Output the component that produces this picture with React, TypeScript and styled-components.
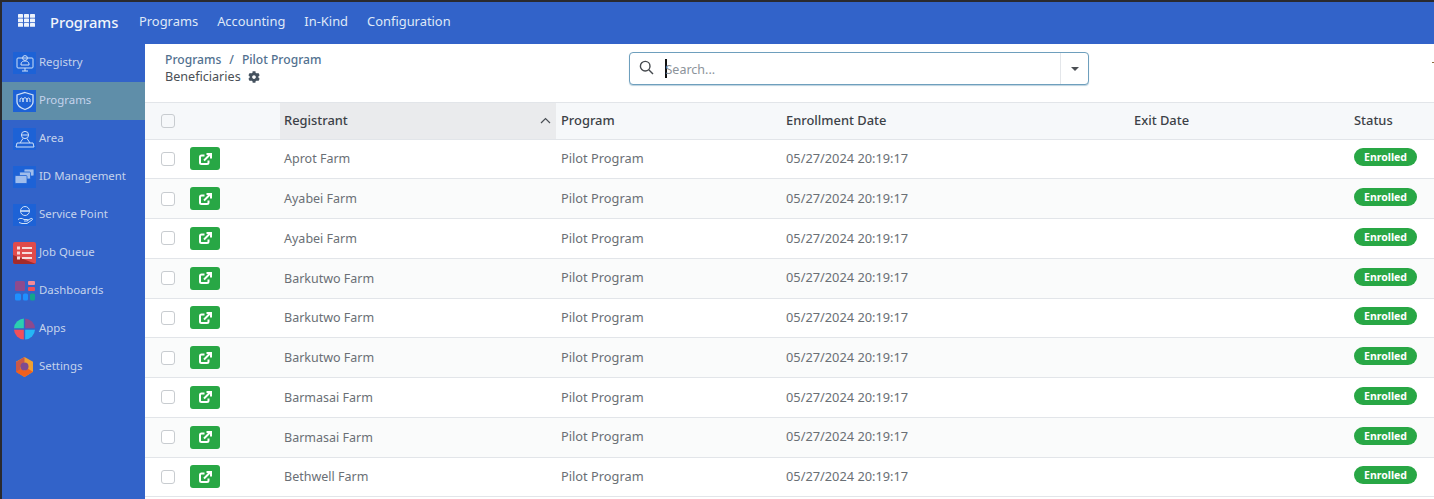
import React from "react";
import styled, { createGlobalStyle } from "styled-components";

const Global = createGlobalStyle`
  html, body { margin: 0; padding: 0; height: 100%; overflow: hidden; background: #fff; }
  body { font-family: "Noto Sans", "Open Sans", sans-serif; }
  #root { height: 100%; }
  * { box-sizing: border-box; }
`;
const Frame = styled.div`
  width: 1434px; height: 499px; background: #fff; overflow: hidden;
  border-top: 2px solid #2a2a2e; border-left: 2px solid #2a2a2e;
  display: flex; flex-direction: column;
`;
const TopBar = styled.header`
  height: 42px; flex: none; background: #3263c9; display: flex; align-items: center; color: #fff; padding-bottom: 3px;
`;
const AppsButton = styled.div`
  width: 48px; display: flex; justify-content: center; padding: 0 0 2px 0;
`;
const Brand = styled.div`
  font-size: 14.7px; font-weight: 500; color: #f1f5fb; width: 89px;
`;
const TopNav = styled.nav`
  display: flex; gap: 19px; font-size: 12.9px; color: #dfe8f7; margin-bottom: 1px;
`;
const Body = styled.div`
  flex: 1; display: flex; min-height: 0;
`;
const Sidebar = styled.aside`
  width: 143px; flex: none; background: #3263c9;
`;
const SideItem = styled.div<{ $active?: boolean }>`
  height: 38px; display: flex; align-items: center; gap: 3px; padding-left: 11px;
  background: ${(p) => (p.$active ? "#5f8ea9" : "transparent")};
  color: #c5d3ec; font-size: 11.4px; padding-bottom: 1px;
`;
const SideLabel = styled.span`
  padding-bottom: 2px;
`;
const IconBox = styled.span<{ $tile?: boolean }>`
  width: 23px; height: 22px; flex: none; display: flex; align-items: center; justify-content: center;
  background: ${(p) => (p.$tile ? "#1d62d6" : "transparent")};
`;
const Main = styled.main`
  flex: 1; min-width: 0; display: flex; flex-direction: column;
`;
const ControlPanel = styled.div`
  height: 58px; flex: none; display: grid; grid-template-columns: 464px 460px 1fr; padding-left: 20px;
`;
const Crumbs = styled.div`
  padding-top: 8px; font-size: 12px; line-height: 16px;
`;
const CrumbTrail = styled.div`
  color: #52718f; font-weight: 500; display: flex; gap: 8px; height: 16px; font-size: 12.1px;
`;
const CrumbSub = styled.div`
  color: #4a4f55; display: flex; align-items: center; gap: 7px; margin-top: 1px; font-size: 12.6px;
`;
const SearchBox = styled.div`
  margin-top: 8px; height: 33px; border: 1px solid #6e9fbd; border-radius: 4px;
  display: flex; align-items: center; background: #fff; box-shadow: 0 1px 1px #bcd2df;
`;
const SearchIcon = styled.span`
  width: 35px; display: flex; justify-content: center; padding-right: 3px; margin-bottom: 2px;
`;
const Caret = styled.span`
  width: 1.5px; height: 19px; background: #111; flex: none;
`;
const Placeholder = styled.span`
  flex: 1; font-size: 12.5px; color: #8c939a; margin-left: -1px; padding-top: 1px;
`;
const DropButton = styled.span`
  width: 28px; height: 100%; border-left: 1px solid #e3e6ea; display: flex; align-items: center; justify-content: center;
`;
const Triangle = styled.span`
  width: 0; height: 0; border-left: 4px solid transparent; border-right: 4px solid transparent; border-top: 4.5px solid #4b4f54;
`;
const Tick = styled.div`
  justify-self: end; width: 2px; height: 1px; margin-top: 18px; background: #8a6a3a;
`;
const Table = styled.div`
  display: flex; flex-direction: column; flex: 1; min-height: 0;
`;
const Columns = `grid-template-columns: 41px 94px 277px 225px 348px 220px 1fr;`;
const HeadRow = styled.div`
  height: 37.5px; flex: none; display: grid; ${Columns}
  background: #f6f8fa; border-top: 1px solid #e2e5e9; border-bottom: 1px solid #e2e5e9;
  font-size: 12.9px; font-weight: 500; color: #3c4147; align-items: stretch;
`;
const HeadCell = styled.div`
  display: flex; align-items: center; padding: 0 0 1.5px 4px;
`;
const SortedHeadCell = styled(HeadCell)`
  justify-content: space-between; padding-right: 5px; margin-right: 1px; background: #eaebed;
`;
const CheckCell = styled.div`
  display: flex; align-items: center; padding-left: 16px;
`;
const Box = styled.span<{ $head?: boolean }>`
  width: 14px; height: 14px; border: 1px solid #c8ccd0; border-radius: 3px; display: block;
  background: ${(p) => (p.$head ? "#f6f8fa" : "#fff")};
`;
const Row = styled.div`
  height: 39.75px; flex: none; display: grid; ${Columns}
  align-items: center; font-size: 12.8px; color: #6a6f75;
  border-bottom: 1px solid #e2e5e9;
  &:nth-child(odd) { background: #fafbfb; }
`;
const Cell = styled.div`
  padding: 0 0 1.5px 4px;
`;
const NameCell = styled(Cell)`
  font-size: 12.5px; padding-bottom: 0;
`;
const OpenCell = styled.div`
  padding-left: 4px; display: flex;
`;
const OpenButton = styled.span`
  width: 30px; height: 23px; border-radius: 3px; background: #28a745; display: flex; align-items: center; justify-content: center;
`;
const Badge = styled.span`
  display: inline-flex; width: 63px; height: 18px; border-radius: 9px; background: #28a745; color: #fff;
  font-size: 10.5px; font-weight: 700; align-items: center; justify-content: center; margin-bottom: 3px;
`;
const StatusCell = styled.div`
  padding-left: 4px; display: flex;
`;

const Line = { fill: "none", stroke: "#cfe0f7", strokeWidth: 1 } as const;

const RegistryIcon = () => (
  <svg width="20" height="20" viewBox="0 0 20 20" {...Line}>
    <rect x="2" y="5" width="16" height="10" rx="1" />
    <circle cx="10" cy="5" r="2.4" />
    <path d="M6 11c0-2 2-3 4-3s4 1 4 3v1H6zM7 18h6M10 15v3" />
  </svg>
);
const ProgramsIcon = () => (
  <svg width="20" height="20" viewBox="0 0 20 20" {...Line}>
    <path d="M10 1.5 18 4v7c0 3.5-4 6-8 7.5C6 17 2 14.5 2 11V4z" strokeWidth="1.3" />
    <path d="M5 11V8l1.5-1L8 8v3M8 11V8l2-1.5L12 8v3M12 11V8l1.5-1L15 8v3" />
  </svg>
);
const AreaIcon = () => (
  <svg width="20" height="20" viewBox="0 0 20 20" {...Line}>
    <circle cx="10" cy="6" r="3.6" />
    <path d="M8 9.5 5 14M12 9.5l3 4.5M2 14h16l1 4H1zM7 6h6" />
  </svg>
);
const IdIcon = () => (
  <svg width="21" height="18" viewBox="0 0 21 18" fill="#9fbdec" stroke="#1d62d6" strokeWidth="0.8">
    <rect x="10" y="1" width="10" height="7" rx="1" />
    <rect x="5.5" y="4" width="11" height="7" rx="1" />
    <rect x="1" y="7.5" width="12" height="8" rx="1" />
  </svg>
);
const ServiceIcon = () => (
  <svg width="20" height="20" viewBox="0 0 20 20" {...Line}>
    <circle cx="10" cy="6" r="4.5" />
    <path d="M6 6h8" strokeWidth="1.6" />
    <path d="M3 14.5c2-1.5 4-1.5 6 0h3c1.5 0 1.5 1.5 0 1.5H9M12 15.5l4-2c1.5-.5 2 .8 1 1.5l-5 3.5H7l-3-1" />
  </svg>
);
const JobIcon = () => (
  <svg width="23" height="22" viewBox="0 0 23 22">
    <rect width="23" height="22" rx="2" fill="#e04b4b" />
    <path d="M0 13 23 22H2a2 2 0 0 1-2-2z" fill="#a32b2b" />
    <g fill="#f6dcdc">
      <rect x="4" y="4.5" width="3" height="3" />
      <rect x="4" y="9.5" width="3" height="3" />
      <rect x="4" y="14.5" width="3" height="3" />
      <rect x="9" y="5" width="10" height="2" />
      <rect x="9" y="10" width="10" height="2" />
      <rect x="9" y="15" width="10" height="2" />
    </g>
  </svg>
);
const DashIcon = () => (
  <svg width="20" height="20" viewBox="0 0 20 20">
    <rect x="0" y="0" width="10" height="10" rx="1.5" fill="#8d4a8e" />
    <rect x="13" y="0" width="7" height="4" rx="1" fill="#f38a96" />
    <rect x="13" y="6" width="7" height="4" rx="1" fill="#ef4e58" />
    <rect x="0" y="12.5" width="6" height="7" rx="1.5" fill="#1e90ff" />
    <rect x="8" y="12.5" width="5" height="7" rx="1.5" fill="#1e90ff" />
    <rect x="15" y="12.5" width="5" height="7" rx="1.5" fill="#12a58c" />
  </svg>
);
const AppsIcon = () => (
  <svg width="23" height="22" viewBox="0 0 22 22">
    <path d="M10.3 0.5A10.5 10.5 0 0 0 .5 10.3h9.8z" fill="#2bd0b0" />
    <path d="M11.7 0.5a10.5 10.5 0 0 1 9.8 9.8h-9.8z" fill="#8d4a8e" />
    <path d="M.5 11.7a10.5 10.5 0 0 0 9.8 9.8v-9.8z" fill="#f0505a" />
    <path d="M21.5 11.7a10.5 10.5 0 0 1-9.8 9.8v-9.8z" fill="#25b7f5" />
  </svg>
);
const SettingsIcon = () => (
  <svg width="19" height="20" viewBox="0 0 19 20">
    <path d="M9.5 0 18 4.7v10L9.5 20 1 14.7v-10z" fill="#f0a030" />
    <path d="M1 5v9.7L6 18l-.5-8L9.5 5V0z" fill="#c9584a" />
    <path d="M1 14.7 9.5 20l8.500-5.300-5-3-3.500 2-3.500-2z" fill="#f0601e" />
    <circle cx="9.5" cy="9.5" r="4" fill="#7d4a90" />
  </svg>
);

const GridIcon = () => (
  <svg width="17" height="13" viewBox="0 0 17 13" fill="#eef3fb">
    {[0, 4.5, 9].map((y) =>
      [0, 6, 12].map((x) => <rect key={`${x}-${y}`} x={x} y={y} width="5" height="3.8" rx="0.6" />)
    )}
  </svg>
);
const GearIcon = () => (
  <svg width="12" height="12" viewBox="0 0 512 512" fill="#45525f">
    <path d="M487 316l-42-25c4-23 4-47 0-70l42-25c5-3 7-9 6-14-11-35-30-67-54-94-4-4-10-5-15-2l-42 25c-18-15-39-27-61-35V27c0-6-4-11-10-12-36-8-73-8-107 0-6 1-10 6-10 12v49c-22 8-43 20-61 35L91 86c-5-3-11-2-15 2-24 27-43 59-54 94-2 5 1 11 6 14l42 25c-4 23-4 47 0 70l-42 25c-5 3-7 9-6 14 11 35 30 67 54 94 4 4 10 5 15 2l42-25c18 15 39 27 61 35v49c0 6 4 11 10 12 36 8 73 8 107 0 6-1 10-6 10-12v-49c22-8 43-20 61-35l42 25c5 3 11 2 15-2 24-27 43-59 54-94 2-5-1-11-6-14zM256 336c-44 0-80-36-80-80s36-80 80-80 80 36 80 80-36 80-80 80z" />
  </svg>
);
const Magnifier = () => (
  <svg width="15" height="15" viewBox="0 0 15 15" fill="none" stroke="#45494e" strokeWidth="1.4">
    <circle cx="6.2" cy="6.2" r="4.8" />
    <path d="M9.8 9.8 14 14" />
  </svg>
);
const SortUp = () => (
  <svg width="11" height="7" viewBox="0 0 11 7" fill="none" stroke="#4a4f55" strokeWidth="1.2">
    <path d="M1 6l4.5-4.5L10 6" />
  </svg>
);
const ExternalLink = () => (
  <svg width="13" height="12" viewBox="0 0 13 12" fill="none" stroke="#fff" strokeWidth="2">
    <path d="M5.5 2.5H2.5A1.5 1.5 0 0 0 1 4v5.5A1.5 1.5 0 0 0 2.500 11H8a1.500 1.500 0 0 0 1.500-1.500V7.500" />
    <path d="M5 7.5 11 1.5" />
    <path d="M7.5 1H12v4.5" />
  </svg>
);

const menu: { label: string; icon: React.ReactNode; tile?: boolean; active?: boolean }[] = [
  { label: "Registry", icon: <RegistryIcon />, tile: true },
  { label: "Programs", icon: <ProgramsIcon />, tile: true, active: true },
  { label: "Area", icon: <AreaIcon />, tile: true },
  { label: "ID Management", icon: <IdIcon />, tile: true },
  { label: "Service Point", icon: <ServiceIcon />, tile: true },
  { label: "Job Queue", icon: <JobIcon /> },
  { label: "Dashboards", icon: <DashIcon /> },
  { label: "Apps", icon: <AppsIcon /> },
  { label: "Settings", icon: <SettingsIcon /> },
];
const names = ["Aprot Farm", "Ayabei Farm", "Ayabei Farm", "Barkutwo Farm", "Barkutwo Farm", "Barkutwo Farm", "Barmasai Farm", "Barmasai Farm", "Bethwell Farm"];

export default function App() {
  return (
    <Frame>
      <Global />
      <TopBar>
        <AppsButton><GridIcon /></AppsButton>
        <Brand>Programs</Brand>
        <TopNav>
          <span>Programs</span>
          <span>Accounting</span>
          <span>In-Kind</span>
          <span>Configuration</span>
        </TopNav>
      </TopBar>
      <Body>
        <Sidebar>
          {menu.map((m) => (
            <SideItem key={m.label} $active={m.active}>
              <IconBox $tile={m.tile}>{m.icon}</IconBox>
              <SideLabel>{m.label}</SideLabel>
            </SideItem>
          ))}
        </Sidebar>
        <Main>
          <ControlPanel>
            <Crumbs>
              <CrumbTrail><span>Programs</span><span>/</span><span>Pilot Program</span></CrumbTrail>
              <CrumbSub><span>Beneficiaries</span><GearIcon /></CrumbSub>
            </Crumbs>
            <SearchBox>
              <SearchIcon><Magnifier /></SearchIcon>
              <Caret />
              <Placeholder>Search...</Placeholder>
              <DropButton><Triangle /></DropButton>
            </SearchBox>
            <Tick />
          </ControlPanel>
          <Table>
            <HeadRow>
              <CheckCell><Box $head /></CheckCell>
              <HeadCell />
              <SortedHeadCell><span>Registrant</span><SortUp /></SortedHeadCell>
              <HeadCell>Program</HeadCell>
              <HeadCell>Enrollment Date</HeadCell>
              <HeadCell>Exit Date</HeadCell>
              <HeadCell>Status</HeadCell>
            </HeadRow>
            {names.map((n, i) => (
              <Row key={i}>
                <CheckCell><Box /></CheckCell>
                <OpenCell><OpenButton><ExternalLink /></OpenButton></OpenCell>
                <NameCell>{n}</NameCell>
                <Cell>Pilot Program</Cell>
                <Cell>05/27/2024 20:19:17</Cell>
                <Cell />
                <StatusCell><Badge>Enrolled</Badge></StatusCell>
              </Row>
            ))}
          </Table>
        </Main>
      </Body>
    </Frame>
  );
}
